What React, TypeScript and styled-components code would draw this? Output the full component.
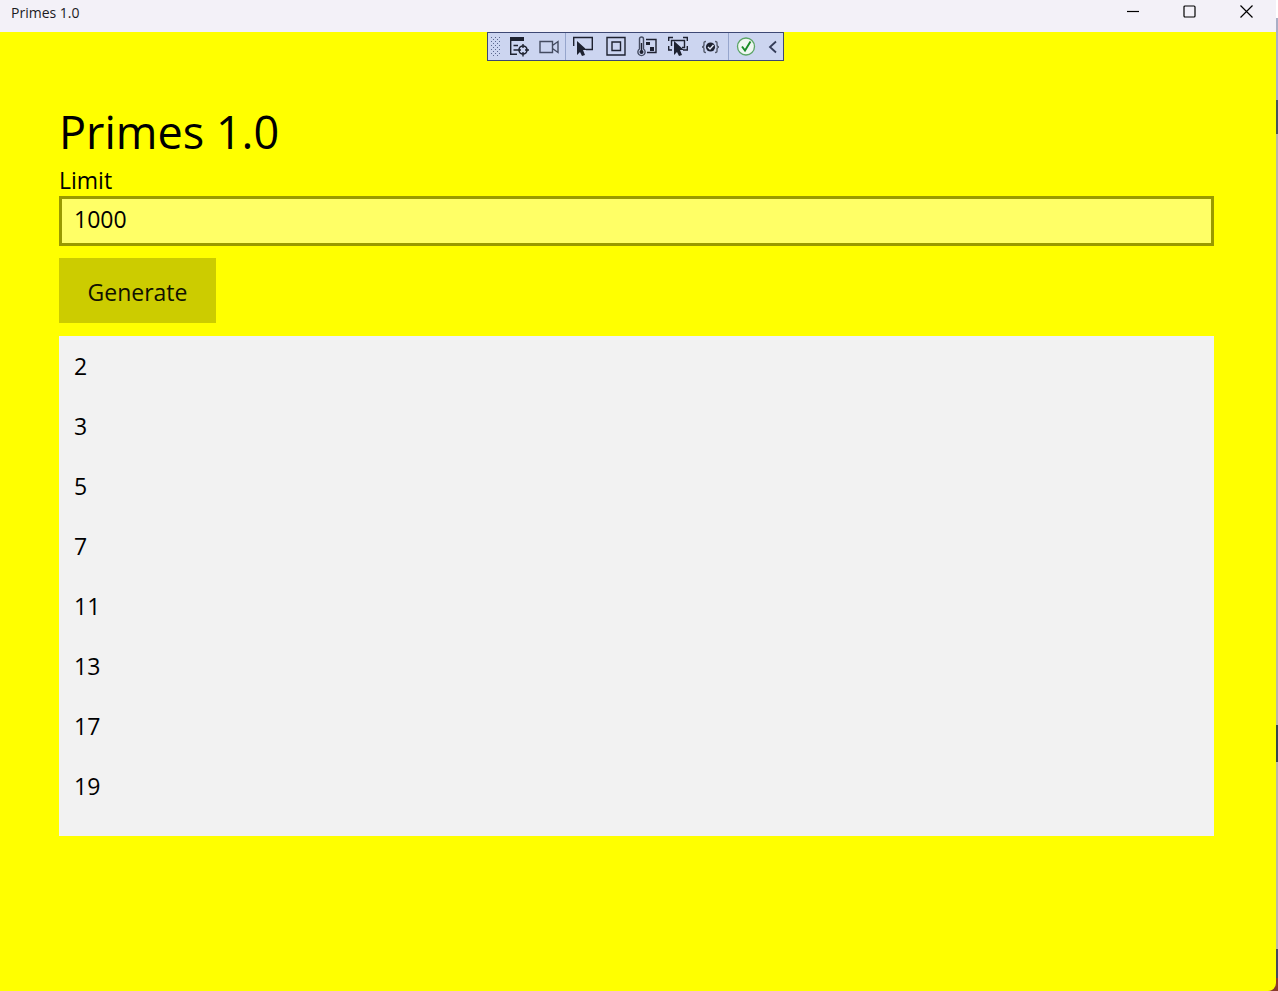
import React, { useState } from "react";
import styled, { createGlobalStyle } from "styled-components";

const GlobalStyle = createGlobalStyle`
  *, *::before, *::after { box-sizing: border-box; }
  body {
    margin: 0;
    background: linear-gradient(
      #ffffff 0 18px,
      #a9aec6 18px 100px,
      #44525c 100px 134px,
      #b9b7a6 134px 725px,
      #34454f 725px 762px,
      #b9b7a6 762px 949px,
      #44485c 949px 978px,
      #8a3a2c 978px
    );
    color: #000;
    font-family: "Open Sans", "Noto Sans", sans-serif;
  }
`;

const Window = styled.div`
  display: flex;
  flex-direction: column;
  min-height: 100vh;
  margin-right: 2px;
  overflow: hidden;
  background: #ffff00;
  border-bottom-right-radius: 8px;
`;

const TitleBar = styled.header`
  display: flex;
  align-items: flex-start;
  justify-content: space-between;
  height: 32px;
  padding: 0 1px 0 11px;
  background: #f3f1f8;
`;

const WindowTitle = styled.span`
  font-size: 14px;
  line-height: 26px;
  color: #1b1b1f;
`;

const WindowButtons = styled.div`
  display: flex;
`;

const WindowButton = styled.button`
  display: flex;
  align-items: center;
  justify-content: center;
  width: 57px;
  height: 23px;
  padding: 0;
  border: 0;
  background: transparent;
`;

const Client = styled.div`
  position: relative;
  flex: 1;
`;

const ToolbarDock = styled.div`
  position: absolute;
  top: 0;
  left: 0;
  right: 0;
  display: flex;
  justify-content: center;
  padding: 0 64px 0 59px;
`;

const Toolbar = styled.div`
  display: flex;
  height: 29px;
  border: 1px solid #3d4874;
  background: #ccd5f0;
`;

const Grip = styled.div`
  display: flex;
  align-items: center;
  justify-content: center;
  width: 15px;
`;

const ToolButton = styled.button<{ $width: number }>`
  display: flex;
  align-items: center;
  justify-content: center;
  width: ${(p) => p.$width}px;
  padding: 0;
  border: 0;
  background: transparent;
`;

const Separator = styled.div<{ $width: number }>`
  display: flex;
  justify-content: center;
  width: ${(p) => p.$width}px;

  &::before {
    content: "";
    width: 1px;
    background: #96a5cc;
  }
`;

const Page = styled.main`
  display: flex;
  flex-direction: column;
  align-items: flex-start;
  padding: 64px 62px 60px 59px;
`;

const Heading = styled.h1`
  margin: 0;
  font-size: 45px;
  font-weight: 400;
  line-height: 72px;
`;

const Label = styled.label`
  padding-bottom: 4px;
  font-size: 23px;
  line-height: 24px;
`;

const TextBox = styled.input`
  width: 100%;
  height: 50px;
  padding: 0 12px 4px;
  border: 3px solid #999900;
  border-radius: 0;
  outline: none;
  background: #ffff66;
  color: #000;
  font-family: inherit;
  font-size: 23px;
`;

const GenerateButton = styled.button`
  height: 65px;
  min-width: 157px;
  margin: 12px 0 13px;
  padding: 2px 28px 0;
  border: 0;
  background: #cccc00;
  color: #111100;
  font-family: inherit;
  font-size: 23px;
`;

const PrimeList = styled.ul`
  width: 100%;
  height: 500px;
  margin: 0;
  padding: 0;
  overflow: hidden;
  background: #f2f2f2;
  list-style: none;
`;

const PrimeRow = styled.li`
  padding: 0 15px;
  font-size: 23px;
  line-height: 60px;
`;

const ink = "#1e2230";
const cursor = "M0 0 L10 9 H6 L8 14 L5 15 L3 11 L0 14 Z";

const Icon = ({ children, width = 20 }: { children: React.ReactNode; width?: number }) => (
  <svg width={width} height="21" viewBox={`0 0 ${width} 21`} fill="none" stroke={ink} strokeWidth="1.4" aria-hidden="true">
    {children}
  </svg>
);

const LiveTreeIcon = () => (
  <Icon>
    <path d="M1 1h14v4H1z" fill={ink} stroke="none" />
    <path d="M1.700 5v13.300H8M4.500 9.500H9M4.500 14H8" />
    <circle cx="14" cy="14" r="4" strokeWidth="1.600" />
    <path d="M14 8v4M14 16v4.500M8 14h4M16 14h4" />
  </Icon>
);

const CameraIcon = () => (
  <Icon>
    <path d="M1 5.500h12.500v11H1zM13.500 9.500l5.500-4v11l-5.500-4" stroke="#444b60" />
  </Icon>
);

const SelectIcon = () => (
  <Icon>
    <path d="M.7 10V1.500h18.600v12H13" />
    <path d={cursor} transform="translate(4 5)" fill={ink} stroke="none" />
  </Icon>
);

const LayoutIcon = () => (
  <Icon>
    <path d="M1 1.500h18v17.500H1zM6 6h8.500v8.500H6z" />
  </Icon>
);

const ThermometerIcon = () => (
  <Icon>
    <path d="M2.500 13V3a2 2 0 0 1 4 0v10a3.600 3.600 0 1 1-4 0z" stroke="#444b60" />
    <circle cx="4.500" cy="16" r="2" fill={ink} stroke="none" />
    <path d="M4.500 16V7M9 3.500h10v13h-9" />
    <path d="M9 6h4v3H9zM13 11h4v4h-4z" fill={ink} stroke="none" />
  </Icon>
);

const FrameSelectIcon = () => (
  <Icon>
    <path d="M.7 5V1.500H5M15 1.500h4.300V5M.7 10v4H4M19.300 10v4H15M3.500 10V4.500h13v7H14" />
    <path d={cursor} transform="translate(6 5)" fill={ink} stroke="none" />
  </Icon>
);

const HotReloadIcon = () => (
  <Icon>
    <path
      d="M6 5.500C3.500 5.500 4 7 4 8.500S3.500 11 2 11c1.500 0 2 1 2 2.500s-.5 3 2 3M15 5.500c2.500 0 2 1.500 2 3s.5 2.500 2 2.500c-1.500 0-2 1-2 2.500s.5 3-2 3"
      stroke="#555b6b"
      strokeWidth="1.400"
    />
    <circle cx="10.500" cy="11" r="4.600" fill={ink} stroke="none" />
    <path d="M8 11l2 2 3.500-4" stroke="#e6ebf8" />
  </Icon>
);

const StatusIcon = () => (
  <Icon>
    <circle cx="10" cy="10.500" r="8.500" fill="#f0f7f2" stroke="#5ba565" strokeWidth="1.300" />
    <path d="M6 10.500l3 4 5.500-9" stroke="#198c26" strokeWidth="1.900" />
  </Icon>
);

const CollapseIcon = () => (
  <Icon width={21}>
    <path d="M14 5.500L8 11l6 5.500" stroke="#333b57" strokeWidth="1.800" />
  </Icon>
);

const gripRows = [1, 5, 9, 13, 17];

const GripDots = () => (
  <svg width="9" height="21" viewBox="0 0 9 21" fill="#5b688f" aria-hidden="true">
    {gripRows.map((y) => (
      <g key={y}>
        <path d={`M0 ${y}h1v1h-1zM4 ${y}h1v1h-1zM8 ${y}h1v1h-1z`} />
        <path d={`M2 ${y + 2}h1v1h-1zM6 ${y + 2}h1v1h-1z`} />
      </g>
    ))}
  </svg>
);

const primes = [2, 3, 5, 7, 11, 13, 17, 19];

export default function App() {
  const [limit, setLimit] = useState("1000");

  return (
    <>
      <GlobalStyle />
      <Window>
        <TitleBar>
          <WindowTitle>Primes 1.0</WindowTitle>
          <WindowButtons>
            <WindowButton aria-label="Minimize">
              <svg width="13" height="13" viewBox="0 0 13 13" stroke="#000">
                <path d="M1 6.500h12" strokeWidth="1.200" />
              </svg>
            </WindowButton>
            <WindowButton aria-label="Maximize">
              <svg width="13" height="13" viewBox="0 0 13 13" fill="none" stroke="#000">
                <rect x="1" y="1" width="11" height="11" rx="1" strokeWidth="1.200" />
              </svg>
            </WindowButton>
            <WindowButton aria-label="Close">
              <svg width="13" height="13" viewBox="0 0 13 13" stroke="#000">
                <path d="M.5.5l12 12M12.500.5l-12 12" strokeWidth="1.200" />
              </svg>
            </WindowButton>
          </WindowButtons>
        </TitleBar>
        <Client>
          <ToolbarDock>
            <Toolbar role="toolbar">
              <Grip><GripDots /></Grip>
              <ToolButton $width={31} aria-label="Live visual tree"><LiveTreeIcon /></ToolButton>
              <ToolButton $width={30} aria-label="Record"><CameraIcon /></ToolButton>
              <Separator $width={2} />
              <ToolButton $width={34} aria-label="Select element"><SelectIcon /></ToolButton>
              <ToolButton $width={31} aria-label="Layout adorners"><LayoutIcon /></ToolButton>
              <ToolButton $width={32} aria-label="Diagnostics"><ThermometerIcon /></ToolButton>
              <ToolButton $width={30} aria-label="Track focus"><FrameSelectIcon /></ToolButton>
              <ToolButton $width={34} aria-label="Binding failures"><HotReloadIcon /></ToolButton>
              <Separator $width={2} />
              <ToolButton $width={33} aria-label="Hot reload status"><StatusIcon /></ToolButton>
              <ToolButton $width={21} aria-label="Collapse"><CollapseIcon /></ToolButton>
            </Toolbar>
          </ToolbarDock>
          <Page>
            <Heading>Primes 1.0</Heading>
            <Label htmlFor="limit">Limit</Label>
            <TextBox id="limit" type="text" value={limit} onChange={(e) => setLimit(e.target.value)} />
            <GenerateButton type="button">Generate</GenerateButton>
            <PrimeList>
              {primes.map((n) => (
                <PrimeRow key={n}>{n}</PrimeRow>
              ))}
            </PrimeList>
          </Page>
        </Client>
      </Window>
    </>
  );
}
